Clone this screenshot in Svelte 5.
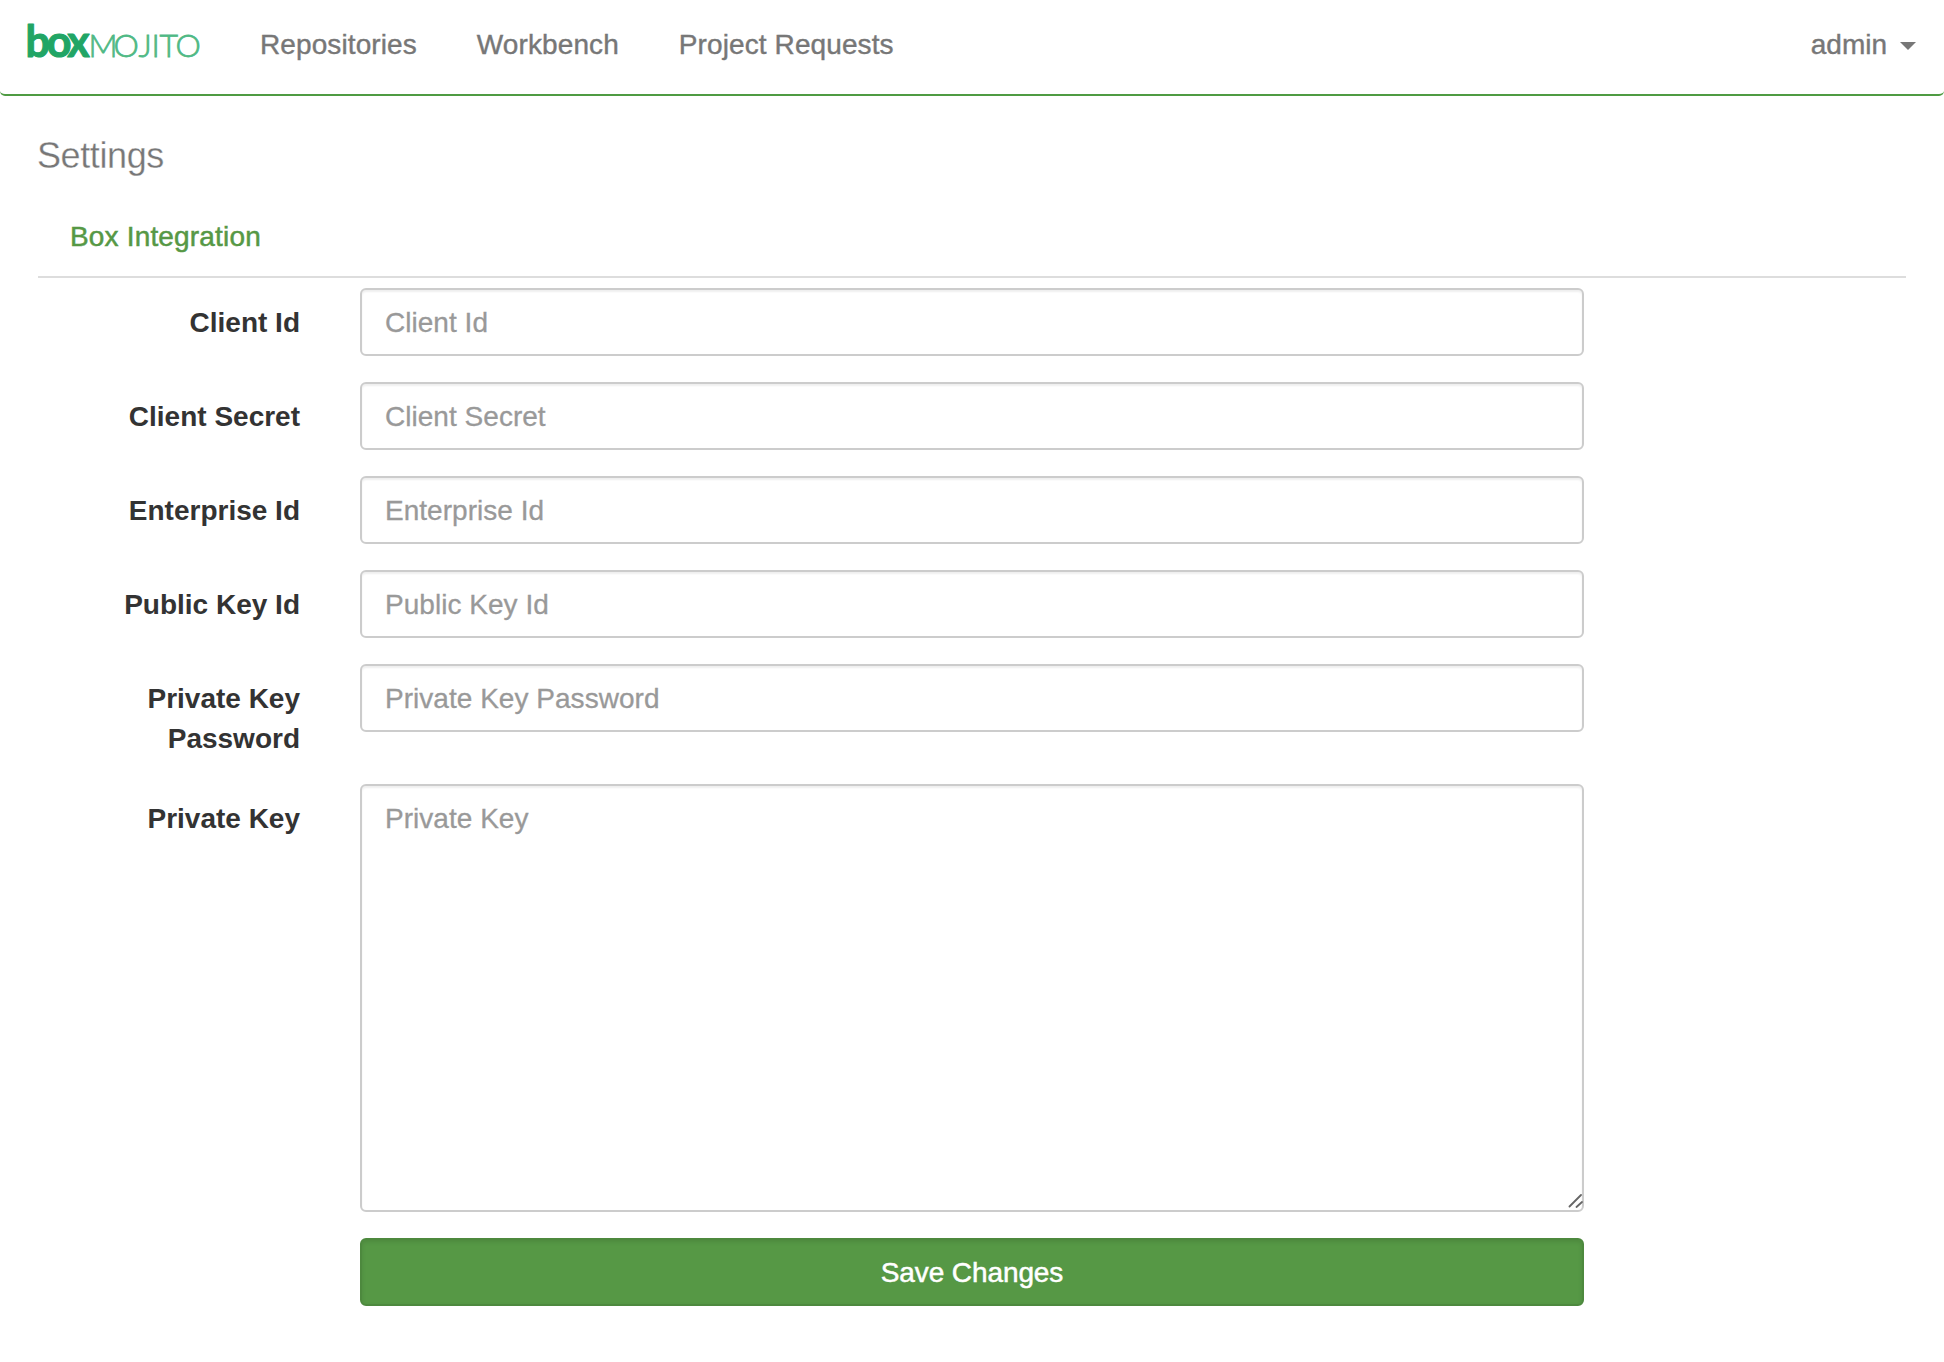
<script>
  const links = ['Repositories', 'Workbench', 'Project Requests'];

  const fields = ['Client Id', 'Client Secret', 'Enterprise Id', 'Public Key Id', 'Private Key Password'];
</script>

<nav class="navbar">
  <svg class="brand" width="176" height="44" viewBox="0 0 176 44" role="img" aria-label="box mojito">
    <text class="brand-bold" x="-2.5" y="36.5">box</text>
    <text class="brand-thin" x="60.5 85.5 110.5 123.5 131.5 147.5" y="36.5">MOJITO</text>
  </svg>
  <div class="links">
    {#each links as link}
      <span class="link">{link}</span>
    {/each}
  </div>
  <div class="user">
    <span>admin</span>
    <span class="caret"></span>
  </div>
</nav>

<main>
  <h1>Settings</h1>
  <div class="tabs"><span class="tab">Box Integration</span></div>

  <form>
    {#each fields as field}
      <div class="row">
        <label for={field}>{field}</label>
        <input id={field} type="text" placeholder={field} />
      </div>
    {/each}
    <div class="row">
      <label for="key">Private Key</label>
      <div class="area">
        <textarea id="key" placeholder="Private Key"></textarea>
        <svg class="grip" width="16" height="16" viewBox="0 0 16 16">
          <path d="M2.5 13.5 L14 2 M9.5 14 L15 9" />
        </svg>
      </div>
    </div>
    <div class="row">
      <span></span>
      <button type="button">Save Changes</button>
    </div>
  </form>
</main>

<style>
  :global(body) {
    background: #fff;
    color: #333;
    font: 28px/40px 'Liberation Sans', Arial, sans-serif;
  }

  .navbar {
    box-sizing: border-box;
    display: flex;
    align-items: flex-start;
    height: 96px;
    padding: 20px 28px 0;
    border-bottom: 2px solid #4f9b43;
    border-radius: 5px;
    color: #777;
    line-height: 40px;
    -webkit-text-stroke: 0.4px currentColor;
  }
  .brand {
    display: block;
    overflow: visible;
    -webkit-text-stroke: 0;
  }
  .brand-bold {
    font: 700 43px Lato, sans-serif;
    letter-spacing: -3.2px;
    fill: #21a565;
    stroke: #21a565;
    stroke-width: 1.1px;
    stroke-linejoin: round;
  }
  .brand-thin {
    font: 300 32px Lato, sans-serif;
    fill: #4fb985;
    stroke: #4fb985;
    stroke-width: 0.8px;
  }
  .links {
    display: flex;
    gap: 60px;
    margin: 5px 0 0 56px;
  }
  .link {
    white-space: nowrap;
    letter-spacing: 0.1px;
  }
  .user {
    display: flex;
    align-items: center;
    gap: 13px;
    margin: 5px 0 0 auto;
  }
  .caret {
    border-top: 8px solid #777;
    border-left: 8px solid transparent;
    border-right: 8px solid transparent;
    margin-top: 2px;
  }

  main {
    padding: 0 38px;
  }
  h1 {
    margin: 0 0 0 -1px;
    padding-top: 40px;
    font-size: 36px;
    line-height: 40px;
    font-weight: 400;
    letter-spacing: -0.4px;
    color: #777;
    -webkit-text-stroke: 0.3px #fff;
  }
  .tabs {
    height: 59px;
    padding: 41px 32px 0;
    border-bottom: 2px solid #ddd;
  }
  .tab {
    color: #569845;
    letter-spacing: 0.17px;
    -webkit-text-stroke: 0.5px currentColor;
  }

  form {
    display: flex;
    flex-direction: column;
    gap: 26px;
    padding-top: 10px;
  }
  .row {
    display: grid;
    grid-template-columns: 262px 1224px;
    column-gap: 60px;
    align-items: start;
  }
  label {
    padding-top: 15px;
    margin-bottom: -1px;
    font-weight: 700;
    text-align: right;
  }
  input,
  textarea {
    box-sizing: border-box;
    display: block;
    width: 100%;
    margin: 0;
    padding: 13px 23px 11px;
    border: 2px solid #ccc;
    border-radius: 6px;
    box-shadow: inset 0 2px 2px rgba(0, 0, 0, 0.065);
    background: #fff;
    font: inherit;
    letter-spacing: 0.03px;
  }
  input {
    height: 68px;
  }
  textarea {
    height: 428px;
    resize: none;
  }
  input::placeholder,
  textarea::placeholder {
    color: #999;
    opacity: 1;
    -webkit-text-stroke: 0.3px #999;
  }
  .area {
    position: relative;
  }
  .grip {
    position: absolute;
    right: 1px;
    bottom: 3px;
    fill: none;
    stroke: #666;
    stroke-width: 1.8;
    stroke-linecap: round;
  }
  button {
    height: 68px;
    padding: 2px 0 0;
    border: 2px solid #4d893e;
    border-radius: 6px;
    background: #569845;
    box-shadow: inset 0 2px 4px rgba(0, 0, 0, 0.1);
    color: #fff;
    font: inherit;
    letter-spacing: -0.1px;
    -webkit-text-stroke: 0.5px #fff;
  }
</style>
